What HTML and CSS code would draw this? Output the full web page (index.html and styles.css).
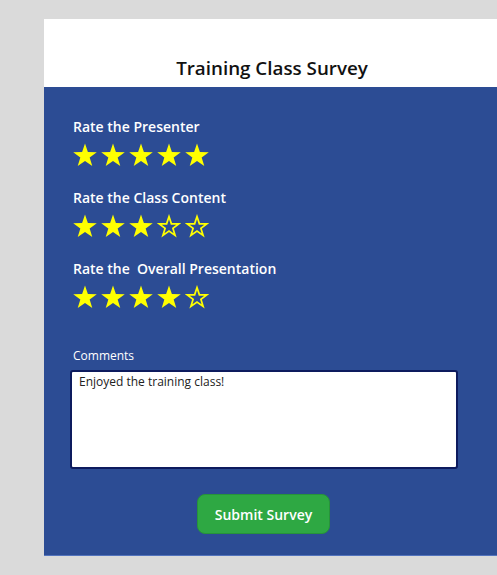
FILE: index.html
```html
<!DOCTYPE html>
<html>
<head>
<meta charset="utf-8">
<link rel="stylesheet" href="styles.css">
</head>
<body>
<div class="panel">
  <header class="head"><h1 class="title">Training Class Survey</h1></header>
  <main class="body">
    <section class="rating">
      <div class="label">Rate the Presenter</div>
      <div class="stars">
        <svg class="star" viewBox="0 0 24 24"><polygon class="full" points="12,0.6 14.88,9.04 23.79,9.17 16.66,14.51 19.29,23.03 12,17.9 4.71,23.03 7.34,14.51 0.21,9.17 9.12,9.04"/></svg>
        <svg class="star" viewBox="0 0 24 24"><polygon class="full" points="12,0.6 14.88,9.04 23.79,9.17 16.66,14.51 19.29,23.03 12,17.9 4.71,23.03 7.34,14.51 0.21,9.17 9.12,9.04"/></svg>
        <svg class="star" viewBox="0 0 24 24"><polygon class="full" points="12,0.6 14.88,9.04 23.79,9.17 16.66,14.51 19.29,23.03 12,17.9 4.71,23.03 7.34,14.51 0.21,9.17 9.12,9.04"/></svg>
        <svg class="star" viewBox="0 0 24 24"><polygon class="full" points="12,0.6 14.88,9.04 23.79,9.17 16.66,14.51 19.29,23.03 12,17.9 4.71,23.03 7.34,14.51 0.21,9.17 9.12,9.04"/></svg>
        <svg class="star" viewBox="0 0 24 24"><polygon class="full" points="12,0.6 14.88,9.04 23.79,9.17 16.66,14.51 19.29,23.03 12,17.9 4.71,23.03 7.34,14.51 0.21,9.17 9.12,9.04"/></svg>
      </div>
    </section>
    <section class="rating">
      <div class="label">Rate the Class Content</div>
      <div class="stars">
        <svg class="star" viewBox="0 0 24 24"><polygon class="full" points="12,0.6 14.88,9.04 23.79,9.17 16.66,14.51 19.29,23.03 12,17.9 4.71,23.03 7.34,14.51 0.21,9.17 9.12,9.04"/></svg>
        <svg class="star" viewBox="0 0 24 24"><polygon class="full" points="12,0.6 14.88,9.04 23.79,9.17 16.66,14.51 19.29,23.03 12,17.9 4.71,23.03 7.34,14.51 0.21,9.17 9.12,9.04"/></svg>
        <svg class="star" viewBox="0 0 24 24"><polygon class="full" points="12,0.6 14.88,9.04 23.79,9.17 16.66,14.51 19.29,23.03 12,17.9 4.71,23.03 7.34,14.51 0.21,9.17 9.12,9.04"/></svg>
        <svg class="star" viewBox="0 0 24 24"><polygon class="empty" points="12,2.6 14.4,9.8 21.8,9.9 15.9,14.3 18.1,21.4 12,17.1 5.9,21.4 8.1,14.3 2.2,9.9 9.6,9.8"/></svg>
        <svg class="star" viewBox="0 0 24 24"><polygon class="empty" points="12,2.6 14.4,9.8 21.8,9.9 15.9,14.3 18.1,21.4 12,17.1 5.9,21.4 8.1,14.3 2.2,9.9 9.6,9.8"/></svg>
      </div>
    </section>
    <section class="rating">
      <div class="label">Rate the&nbsp; Overall Presentation</div>
      <div class="stars">
        <svg class="star" viewBox="0 0 24 24"><polygon class="full" points="12,0.6 14.88,9.04 23.79,9.17 16.66,14.51 19.29,23.03 12,17.9 4.71,23.03 7.34,14.51 0.21,9.17 9.12,9.04"/></svg>
        <svg class="star" viewBox="0 0 24 24"><polygon class="full" points="12,0.6 14.88,9.04 23.79,9.17 16.66,14.51 19.29,23.03 12,17.9 4.71,23.03 7.34,14.51 0.21,9.17 9.12,9.04"/></svg>
        <svg class="star" viewBox="0 0 24 24"><polygon class="full" points="12,0.6 14.88,9.04 23.79,9.17 16.66,14.51 19.29,23.03 12,17.9 4.71,23.03 7.34,14.51 0.21,9.17 9.12,9.04"/></svg>
        <svg class="star" viewBox="0 0 24 24"><polygon class="full" points="12,0.6 14.88,9.04 23.79,9.17 16.66,14.51 19.29,23.03 12,17.9 4.71,23.03 7.34,14.51 0.21,9.17 9.12,9.04"/></svg>
        <svg class="star" viewBox="0 0 24 24"><polygon class="empty" points="12,2.6 14.4,9.8 21.8,9.9 15.9,14.3 18.1,21.4 12,17.1 5.9,21.4 8.1,14.3 2.2,9.9 9.6,9.8"/></svg>
      </div>
    </section>
    <div class="comments-label">Comments</div>
    <div class="comments">Enjoyed the training class!</div>
    <button class="submit" type="button">Submit Survey</button>
  </main>
</div>
</body>
</html>
```

FILE: styles.css
```css
html, body {
  margin: 0;
  padding: 0;
}
body {
  background: #dadada;
  overflow: hidden;
  font-family: "Open Sans", "Noto Sans", sans-serif;
  width: 497px;
  height: 575px;
}
.panel {
  margin-left: 44px;
  margin-top: 19px;
  width: 456px;
}
.head {
  background: #ffffff;
  height: 68px;
  display: flex;
  align-items: flex-end;
  justify-content: center;
}
.title {
  margin: 0 0 6px 0;
  font-size: 18.8px;
  font-weight: 600;
  line-height: 26px;
  color: #111;
}
.body {
  background: #2c4c94;
  height: 469px;
  border-bottom: 1px solid #5273bd;
  box-sizing: border-box;
  padding: 30px 0 0 29px;
  display: flex;
  flex-direction: column;
  align-items: flex-start;
}
.rating {
  margin-bottom: 21px;
}
.label {
  color: #ffffff;
  font-size: 14px;
  font-weight: 600;
  line-height: 19px;
  height: 19px;
}
.stars {
  display: flex;
  gap: 4px;
  margin-top: 7px;
}
.star {
  width: 24px;
  height: 24px;
  display: block;
}
.full {
  fill: #ffff00;
}
.empty {
  fill: none;
  stroke: #ffff00;
  stroke-width: 1.7;
  stroke-linejoin: miter;
}
.comments-label {
  margin-top: 18px;
  color: #ffffff;
  font-size: 12px;
  line-height: 16px;
}
.comments {
  margin-top: 6px;
  margin-left: -3px;
  width: 388px;
  height: 99px;
  box-sizing: border-box;
  background: #ffffff;
  border: 2px solid #0d1b5e;
  border-radius: 3px;
  padding: 2px 7px;
  font-size: 12px;
  line-height: 16px;
  color: #222;
}
.submit {
  margin-top: 25px;
  margin-left: 124px;
  width: 133px;
  height: 40px;
  background: #2ea843;
  border: 1px solid #27933a;
  border-radius: 8px;
  color: #ffffff;
  font-family: "Open Sans", "Noto Sans", sans-serif;
  font-size: 14px;
  font-weight: 600;
  padding: 0;
}
```
